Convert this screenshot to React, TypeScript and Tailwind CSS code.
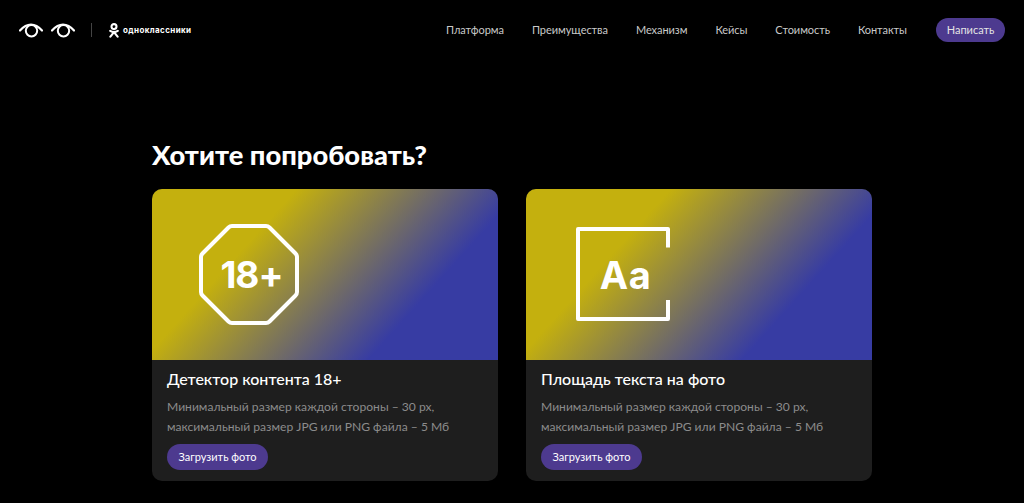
import React from 'react';

const font = "font-['Lato',sans-serif]";

const navItems = ['Платформа', 'Преимущества', 'Механизм', 'Кейсы', 'Стоимость', 'Контакты'];

const EyeIcon = () => (
  <svg width="24" height="15" viewBox="0 0 24 15" fill="none" stroke="white" strokeLinecap="round">
    <path d="M1 7.5 C5 3 8 1.5 12 1.5 C16 1.5 19 3 23 7.5" strokeWidth="2.2" />
    <circle cx="12.5" cy="7.8" r="5.7" strokeWidth="2" />
  </svg>
);

const OkLogo = () => (
  <svg width="11" height="15" viewBox="0 0 11 15" fill="none" stroke="white" strokeWidth="2.1" strokeLinecap="round">
    <circle cx="5" cy="3.6" r="2.5" />
    <path d="M1.2 7.8 C3.6 9.4 6.4 9.4 8.8 7.8" />
    <path d="M5 9.2 L1.4 13.6 M5 9.2 L8.6 13.6" />
  </svg>
);

const OctagonIcon = () => (
  <div className="relative w-[100px] h-[101px]">
    <svg width="100" height="101" viewBox="0 0 100 101" fill="none" stroke="white" strokeWidth="4" strokeLinejoin="round">
      <path d="M33 2 H67 Q69 2 70.5 3.5 L96.5 29.5 Q98 31 98 33 V68 Q98 70 96.5 71.5 L70.5 97.5 Q69 99 67 99 H33 Q31 99 29.5 97.5 L3.5 71.5 Q2 70 2 68 V33 Q2 31 3.5 29.5 L29.5 3.5 Q31 2 33 2 Z" />
    </svg>
    <div className="absolute inset-0 flex items-center justify-center text-white font-['Inter',sans-serif] font-bold text-[37px] tracking-[-1px] pl-[5px]">18+</div>
  </div>
);

const TextAreaIcon = () => (
  <div className="relative w-[94px] h-[94px]">
    <svg width="94" height="94" viewBox="0 0 94 94" fill="none" stroke="white" strokeWidth="4" strokeLinejoin="round">
      <path d="M92 20.5 V2 H2 V92 H92 V73" />
    </svg>
    <div className="absolute inset-0 flex items-center justify-center text-white font-['Inter',sans-serif] font-bold text-[38px] tracking-[0.5px] pt-[2px] pl-[5px]">Aa</div>
  </div>
);

const Card = ({ title, icon, iconClass }: { title: string; icon: React.ReactNode; iconClass: string }) => (
  <div className="w-[346px] h-[292px] rounded-[10px] overflow-hidden bg-[#1e1e1e] flex flex-col">
    <div className={`h-[171px] bg-[linear-gradient(132deg,#c4b00e_29%,#373ca3_74%)] ${iconClass}`}>
      {icon}
    </div>
    <div className="px-[15px] pt-[8px]">
      <h3 className="text-white text-[16px] leading-[22px] font-medium">{title}</h3>
      <p className="mt-[7px] text-[#8c8c8c] text-[12.1px] leading-[20px]">
        Минимальный размер каждой стороны – 30 рх,
        <br />
        максимальный размер JPG или PNG файла – 5 Мб
      </p>
      <button className="mt-[7px] h-[26px] w-[101px] rounded-full bg-[#4d3a8f] text-white text-[11px]">
        Загрузить фото
      </button>
    </div>
  </div>
);

export default function App() {
  return (
    <div className={`min-h-screen bg-black overflow-hidden ${font}`}>
      <header className="h-[60px] pl-[19px] pr-[19px] flex items-center justify-between">
        <div className="flex items-center">
          <div className="flex gap-[8px]">
            <EyeIcon />
            <EyeIcon />
          </div>
          <div className="ml-[16px] w-px h-[14px] bg-[#444]" />
          <div className="ml-[17px] flex items-center gap-[3px]">
            <OkLogo />
            <span className="text-white text-[8px] font-bold tracking-[0.4px] font-['Inter',sans-serif]">одноклассники</span>
          </div>
        </div>
        <nav className="flex items-center gap-[28px]">
          {navItems.map((item) => (
            <a key={item} className="text-[#c9c9c9] text-[11px] tracking-[-0.06px]">
              {item}
            </a>
          ))}
          <button className="ml-[1px] h-[24px] w-[69px] rounded-full bg-[#4d3a8f] text-[#e4e4e4] text-[11px]">Написать</button>
        </nav>
      </header>
      <main className="w-[720px] ml-[152px] pt-[77px]">
        <h1 className="text-white text-[27.3px] leading-[36px] font-black">Хотите попробовать?</h1>
        <div className="mt-[16px] flex gap-[28px]">
          <Card title="Детектор контента 18+" icon={<OctagonIcon />} iconClass="pl-[47px] pt-[35px]" />
          <Card title="Площадь текста на фото" icon={<TextAreaIcon />} iconClass="pl-[50px] pt-[38px]" />
        </div>
      </main>
    </div>
  );
}
